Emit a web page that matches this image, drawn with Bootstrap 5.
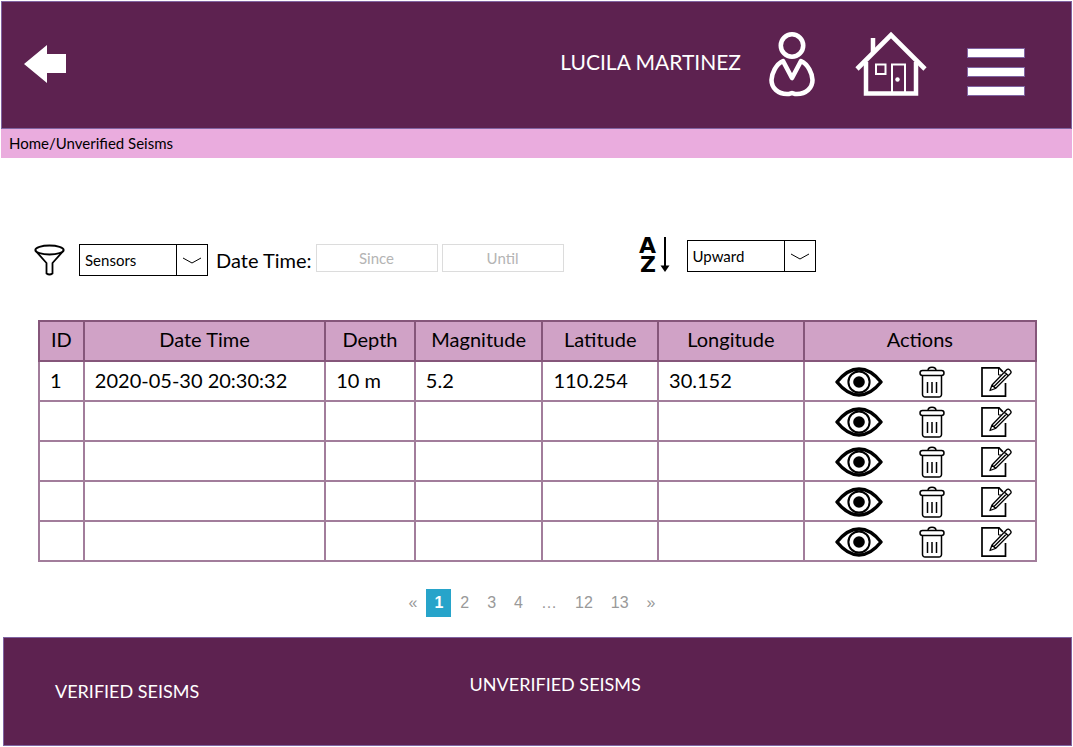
<!DOCTYPE html>
<html lang="en">
<head>
<meta charset="utf-8">
<meta name="viewport" content="width=device-width, initial-scale=1">
<title>Unverified Seisms</title>
<link href="https://cdn.jsdelivr.net/npm/bootstrap@5.3.0/dist/css/bootstrap.min.css" rel="stylesheet">
<style>
  :root { --plum: #5d2250; --edge: #8064a2; --orchid: #eaacde; }
  body { font-family: Lato, "Liberation Sans", sans-serif; color: #000; background: #fff; padding: 1px 1px 0; }
  .topbar { background: var(--plum); border: 1px solid var(--edge); height: 128px; padding: 0 46px 2px 21px; }
  .topbar svg, .tool svg, .actions svg { display: block; }
  .user-name { font-size: 21px; line-height: 24px; color: #fff; padding-bottom: 4px; }
  .bars-btn span { display: block; width: 58px; height: 10px; background: #fff; border: 1px solid var(--edge); }
  .bars-btn { display: grid; gap: 9px; }
  .icon-btn { background: none; border: 0; padding: 0; color: inherit; }
  .crumbs { background: var(--orchid); height: 29px; padding: 0 8px; font-size: 15px; line-height: 29px; }
  .crumbs a { color: #000; text-decoration: none; }
  .filters { margin: 78px 33px 0; }
  .pick { appearance: none; width: 129px; height: 32px; border: 1px solid #000; border-radius: 0; padding: 0 36px 0 5px; font-size: 15px; color: #000;
    background: #fff url("data:image/svg+xml,%3Csvg xmlns='http://www.w3.org/2000/svg' width='31' height='30' fill='none' stroke='%23000'%3E%3Cpath d='M.5 0V30'/%3E%3Cpath d='M7 13l9 5 9-5'/%3E%3C/svg%3E") right center no-repeat; }
  .first-pick { margin-left: 14px; }
  .date-label { font-size: 20px; line-height: 32px; }
  .date-box { width: 122px; height: 28px; border: 1px solid #dcdcdc; text-align: center; font-size: 15px; padding: 0; }
  .date-box::placeholder { color: #b4b4b4; opacity: 1; }
  .sorting { margin-left: 75px; }
  .seisms { margin: 43px 35px 0 37px; }
  .seisms table { table-layout: fixed; width: 100%; border-collapse: collapse; font-size: 20px; line-height: 24px; }
  .seisms th, .seisms td { border: 2px solid #a27d9b; height: 40px; padding: 0 10px 2px; white-space: nowrap; }
  .seisms th { background: #d0a2c6; border-color: #85567a; font-weight: 400; text-align: center; padding: 0 0 4px; }
  .seisms td:last-child { padding: 2px 0 0 10px; }
  .actions { gap: 36px; padding-left: 20px; }
  .pages { margin: 27px 9px 0 0; font: 16px/28px "Liberation Sans", sans-serif; }
  .pages a { color: #999; text-decoration: none; padding: 0 9px; }
  .pages .here { background: #27a4ca; color: #fff; font-weight: 700; padding: 0 8px; }
  .foot { background: var(--plum); border: 1px solid var(--edge); margin: 20px 0 0 2px; height: 109px; font-size: 18px; line-height: 24px; }
  .foot a { color: #fff; text-decoration: none; }
  .foot-first { padding: 41px 0 0 51px; }
  .foot-second { padding: 34px 0 0 21px; }
</style>
</head>
<body>
<svg width="0" height="0" class="position-absolute" aria-hidden="true">
  <symbol id="eye" viewBox="0 0 48 30">
    <path d="M2 15C10 5 17 2 24 2s14 3 22 13C38 25 31 28 24 28S10 25 2 15Z" fill="#fff" stroke="#000" stroke-width="3.400" stroke-linejoin="round"/>
    <circle cx="24" cy="15" r="10.600" fill="none" stroke="#000" stroke-width="2"/>
    <circle cx="24" cy="15" r="5.800"/>
  </symbol>
  <symbol id="bin" viewBox="0 0 26 32">
    <g fill="none" stroke="#000" stroke-width="1.500">
      <path d="M9 4.500c0-4.500 8-4.500 8 0"/>
      <rect x="1" y="4.500" width="24" height="5" rx="2.500"/>
      <path d="M3.500 10V28.500a2.500 2.500 0 0 0 2.500 2.500H20a2.500 2.500 0 0 0 2.500-2.500V10"/>
      <path d="M8.500 16V27M13 16V27M17.500 16V27"/>
    </g>
  </symbol>
  <symbol id="edit" viewBox="0 0 32 32">
    <g fill="none" stroke="#000">
      <path stroke-width="1.700" d="M24.500 17V30.100H1V1.900H18L22 6"/>
      <path stroke-width="1" d="M17.500 2V9H20"/>
      <path stroke-width="1.300" fill="#fff" stroke-linejoin="round" d="M9 24.500L11 19 26 3.500C27.500 2 31.500 5.500 29.500 7.500L14.500 22.500ZM11 19L14.500 22.500M23.500 6L27 9.500M13 20.500L25.500 8"/>
    </g>
  </symbol>
</svg>

<header class="topbar d-flex align-items-center">
  <a href="#" aria-label="Back"><svg width="44" height="40" viewBox="0 0 44 40"><path fill="#fff" d="M1 20L24 1V10H43V29H24V39Z"/></svg></a>
  <span class="user-name ms-auto">LUCILA MARTINEZ</span>
  <a href="#" class="ms-4 ps-1" aria-label="Profile"><svg width="46" height="66" viewBox="0 0 46 66" fill="none" stroke="#fff" stroke-width="4.600"><circle cx="23" cy="14.500" r="11.200"/><path stroke-linejoin="round" d="M14 30C7 33 2.500 43 2.500 49C2.500 57 9 63 18 63C21 63 22 62 23 62S25 63 28 63C37 63 43.500 57 43.500 49C43.500 43 39 33 32 30L23 47Z"/></svg></a>
  <a href="#" class="ms-4 ps-3" aria-label="Home"><svg width="72" height="66" viewBox="0 0 72 66" fill="none" stroke="#fff"><path stroke-width="4.600" d="M2 38L36 4 70 38"/><path stroke-width="4.500" d="M11 31V62.500H61V31M18 21V7"/><rect x="21" y="33.500" width="9.500" height="9.500" stroke-width="2"/><path stroke-width="2" d="M37 62V33.500H50V62"/><circle cx="42.500" cy="48.500" r="2.200" fill="#fff" stroke="none"/></svg></a>
  <button type="button" class="icon-btn bars-btn ms-4 ps-3 mt-3" aria-label="Menu"><span></span><span></span><span></span></button>
</header>
<nav class="crumbs" aria-label="Breadcrumb"><a href="#">Home</a>/<a href="#">Unverified Seisms</a></nav>

<form class="filters tool d-flex align-items-start">
  <svg class="mt-2" width="31" height="33" viewBox="0 0 31 33" fill="none" stroke="#000" stroke-width="1.800"><ellipse cx="15.500" cy="6" rx="14.200" ry="4.500"/><path stroke-linejoin="round" d="M1.300 6.500L12.500 19V29.500Q15.500 31.500 18.500 29.500V19L29.700 6.500"/></svg>
  <select class="pick first-pick mt-2" aria-label="Filter"><option>Sensors</option></select>
  <label class="date-label mt-2 ms-2" for="since">Date Time:</label>
  <input class="date-box mt-2 ms-1" id="since" placeholder="Since">
  <input class="date-box mt-2 ms-1" id="until" placeholder="Until" aria-label="Until">
  <div class="sorting d-flex align-items-start">
    <svg width="32" height="38" viewBox="0 0 32 38" overflow="visible"><g font-family="DejaVu Sans, sans-serif" font-weight="700" font-size="22"><text x="0" y="17">A</text><text x="1" y="36">Z</text></g><path d="M26 1V31" stroke="#000" stroke-width="2"/><path d="M21.500 29.500H30.500L26 36Z"/></svg>
    <select class="pick ms-3 mt-1" aria-label="Order"><option>Upward</option></select>
  </div>
</form>

<main class="seisms">
  <table>
    <colgroup><col style="width:4.500%"><col style="width:24.200%"><col style="width:9%"><col style="width:12.800%"><col style="width:11.600%"><col style="width:14.600%"><col style="width:23.300%"></colgroup>
    <thead><tr><th>ID</th><th>Date Time</th><th>Depth</th><th>Magnitude</th><th>Latitude</th><th>Longitude</th><th>Actions</th></tr></thead>
    <tbody id="rows"></tbody>
  </table>
</main>

<nav class="pages d-flex justify-content-center" aria-label="Pages">
  <a href="#">«</a><a href="#" class="here">1</a><a href="#">2</a><a href="#">3</a><a href="#">4</a><a href="#">…</a><a href="#">12</a><a href="#">13</a><a href="#">»</a>
</nav>

<footer class="foot">
  <div class="row g-0">
    <div class="col-5 foot-first"><a href="#">VERIFIED SEISMS</a></div>
    <div class="col-7 foot-second"><a href="#">UNVERIFIED SEISMS</a></div>
  </div>
</footer>
<script>
  const seisms = [["1", "2020-05-30 20:30:32", "10 m", "5.2", "110.254", "30.152"], [], [], [], []];
  const icon = (id, w, h, name) => `<button type="button" class="icon-btn" aria-label="${name}"><svg width="${w}" height="${h}"><use href="#${id}"/></svg></button>`;
  document.getElementById("rows").innerHTML = seisms.map(s =>
    "<tr>" + [0, 1, 2, 3, 4, 5].map(i => `<td>${s[i] || ""}</td>`).join("") +
    `<td><div class="actions d-flex align-items-center">${icon("eye", 48, 30, "View")}${icon("bin", 26, 32, "Delete")}${icon("edit", 32, 32, "Edit")}</div></td></tr>`).join("");
</script>
<script src="https://cdn.jsdelivr.net/npm/bootstrap@5.3.0/dist/js/bootstrap.bundle.min.js"></script>
</body>
</html>
